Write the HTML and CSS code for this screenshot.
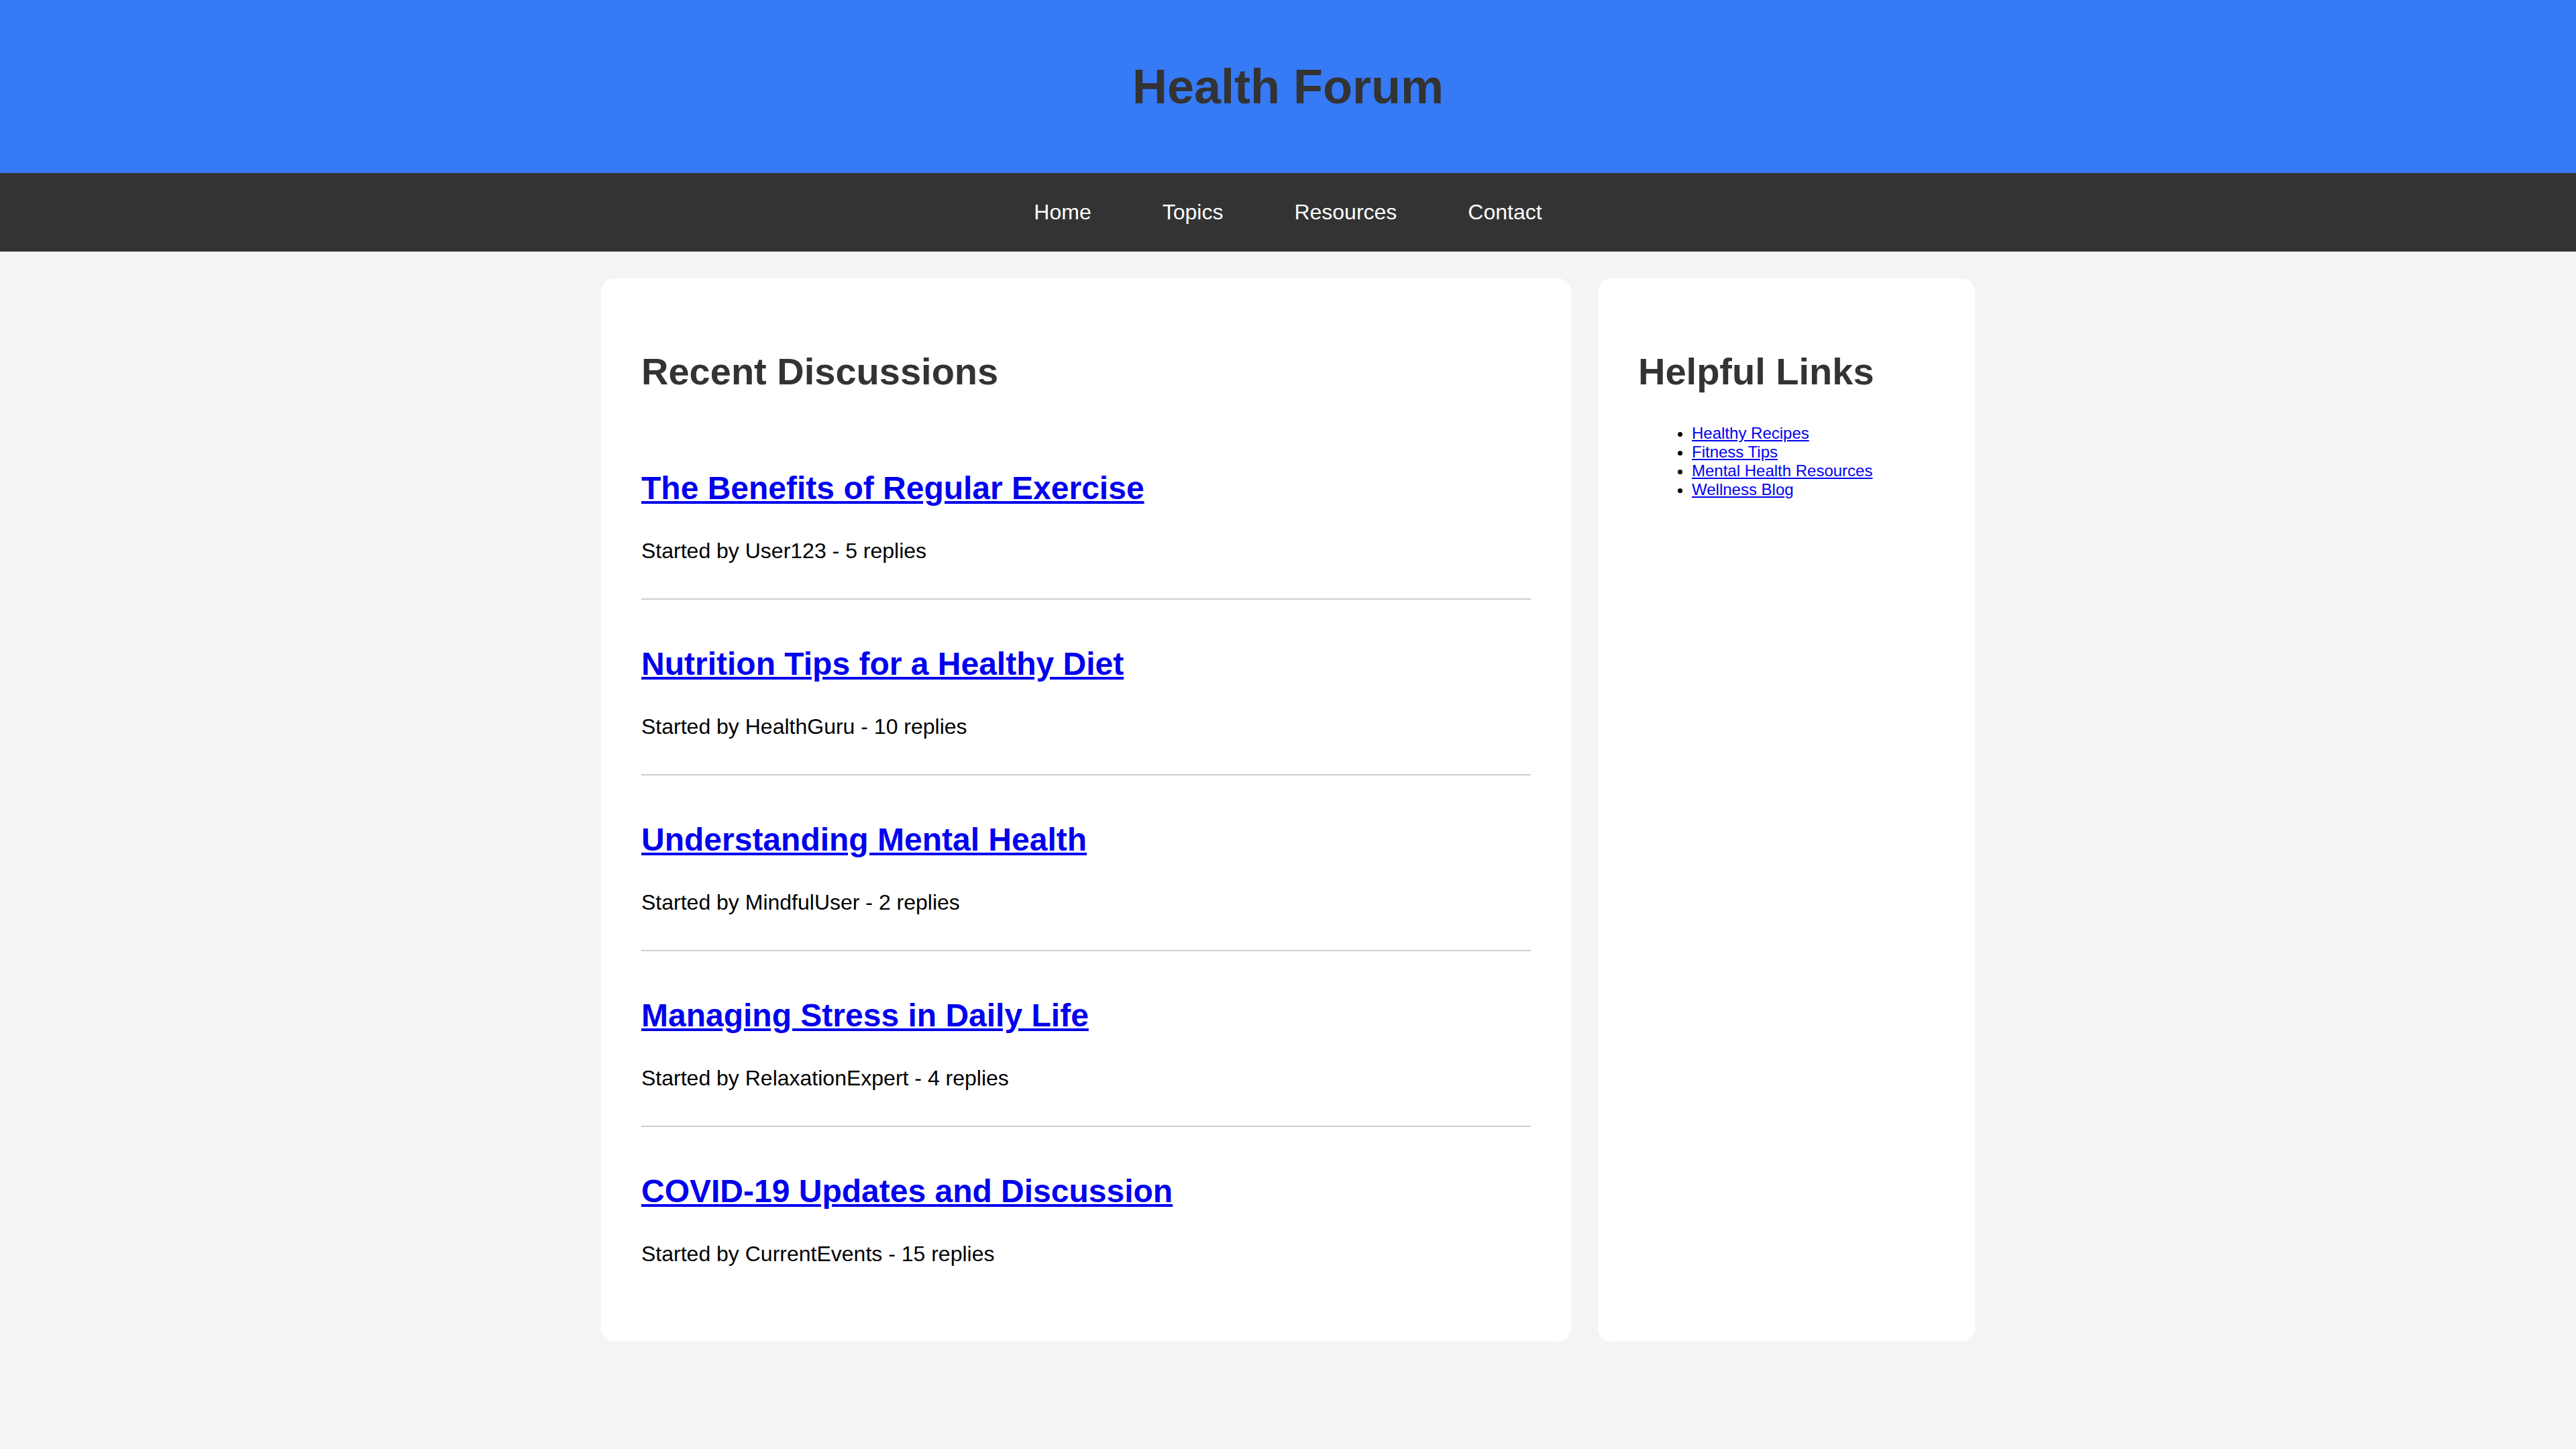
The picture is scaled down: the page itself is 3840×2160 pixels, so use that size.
FILE: index.html
```html
<!DOCTYPE html>
<html lang="en">
<head>
<meta charset="utf-8">
<title>Health Forum</title>
<link rel="stylesheet" href="styles.css">
</head>
<body>
<header class="site-header">
  <h1 class="site-title">Health Forum</h1>
</header>
<nav class="site-nav">
  <ul class="nav-list">
    <li><a href="#">Home</a></li>
    <li><a href="#">Topics</a></li>
    <li><a href="#">Resources</a></li>
    <li><a href="#">Contact</a></li>
  </ul>
</nav>
<div class="container">
  <main class="card main-card">
    <h2 class="card-title">Recent Discussions</h2>
    <div class="topic">
      <h3 class="topic-title"><a href="#">The Benefits of Regular Exercise</a></h3>
      <p class="topic-meta">Started by User123 - 5 replies</p>
    </div>
    <div class="topic">
      <h3 class="topic-title"><a href="#">Nutrition Tips for a Healthy Diet</a></h3>
      <p class="topic-meta">Started by HealthGuru - 10 replies</p>
    </div>
    <div class="topic">
      <h3 class="topic-title"><a href="#">Understanding Mental Health</a></h3>
      <p class="topic-meta">Started by MindfulUser - 2 replies</p>
    </div>
    <div class="topic">
      <h3 class="topic-title"><a href="#">Managing Stress in Daily Life</a></h3>
      <p class="topic-meta">Started by RelaxationExpert - 4 replies</p>
    </div>
    <div class="topic">
      <h3 class="topic-title"><a href="#">COVID-19 Updates and Discussion</a></h3>
      <p class="topic-meta">Started by CurrentEvents - 15 replies</p>
    </div>
  </main>
  <aside class="card side-card">
    <h2 class="card-title">Helpful Links</h2>
    <ul class="link-list">
      <li><a href="#">Healthy Recipes</a></li>
      <li><a href="#">Fitness Tips</a></li>
      <li><a href="#">Mental Health Resources</a></li>
      <li><a href="#">Wellness Blog</a></li>
    </ul>
  </aside>
</div>
</body>
</html>
```

FILE: styles.css
```css
html, body {
  margin: 0;
  padding: 0;
}

body {
  font-family: "Liberation Sans", Arial, sans-serif;
  font-size: 32px;
  background: #f4f4f4;
  color: #000;
}

.site-header {
  background: #367af6;
  padding: 40px;
  text-align: center;
}

.site-title {
  margin: 48px 0;
  font-size: 72px;
  font-weight: bold;
  color: #333;
}

.site-nav {
  background: #333;
  padding: 40px 0;
}

.nav-list {
  list-style: none;
  margin: 0;
  padding: 0;
  display: flex;
  justify-content: center;
  gap: 106px;
}

.nav-list a {
  color: #fff;
  text-decoration: none;
}

.container {
  width: 2048px;
  margin: 40px auto;
  display: flex;
  gap: 40px;
  align-items: stretch;
}

.card {
  background: #fff;
  border-radius: 20px;
  padding: 60px;
  min-width: 0;
}

.main-card {
  flex: 3 1 0;
}

.side-card {
  flex: 1 1 0;
}

.card-title {
  font-size: 56px;
  margin: 46px 0;
  color: #333;
}

.topic {
  padding: 20px 0;
  border-bottom: 2px solid #ccc;
}

.topic:last-child {
  border-bottom: none;
}

.topic-title {
  font-size: 48px;
  margin: 48px 0;
}

.topic-title a {
  color: #0000ee;
}

.topic-meta {
  margin: 32px 0;
}

.link-list {
  font-size: 24px;
  margin: 24px 0;
  padding-left: 80px;
}

.link-list a {
  color: #0000ee;
}
```
